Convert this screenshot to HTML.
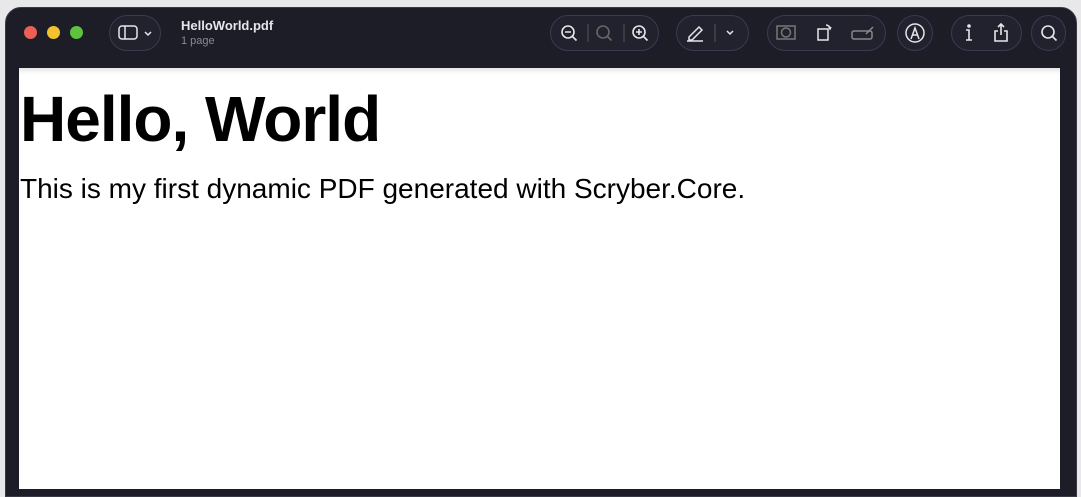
<!DOCTYPE html>
<html><head><meta charset="utf-8"><style>
*{margin:0;padding:0;box-sizing:border-box}
body{width:1081px;height:489px;background:#e8e8ea;overflow:hidden;position:relative;font-family:"Liberation Sans",sans-serif}
.win{position:absolute;left:5px;top:7px;width:1072px;height:490px;background:#1d1d28;border-radius:16px 16px 0 0;border:1px solid #3a3a46}
.page{position:absolute;left:19px;top:68px;width:1041px;height:421px;background:#fff;box-shadow:inset 0 6px 6px -4px #ddd}
.dot{position:absolute;top:26px;width:13px;height:13px;border-radius:50%}
.pill{position:absolute;top:15px;height:36px;border:1px solid #3a3a50;border-radius:18px;background:#22222f}
svg{position:absolute}
.t1{position:absolute;left:181px;top:18px;color:#e6e6ea;font-weight:bold;font-size:13px}
.t2{position:absolute;left:181px;top:35px;color:#8a8a95;font-size:11px}
h1{position:absolute;left:20px;top:82px;font-size:64px;font-weight:bold;color:#000;letter-spacing:-1px;white-space:nowrap}
p{position:absolute;left:20px;top:173px;font-size:28px;color:#000;white-space:nowrap}
</style></head><body>
<div class="win"></div>
<div class="dot" style="left:24px;background:#ec5f57"></div>
<div class="dot" style="left:47px;background:#f4c02e"></div>
<div class="dot" style="left:70px;background:#5ec23f"></div>
<div class="pill" style="left:109px;width:52px"></div>
<svg style="left:118px;top:24px" width="40" height="18" stroke="#e6e6ea" fill="none" stroke-width="1.5"><rect x="1" y="2" width="18" height="13" rx="3"/><line x1="7" y1="2" x2="7" y2="15"/><path d="M27 8l3 3 3-3"/></svg>
<div class="t1">HelloWorld.pdf</div><div class="t2">1 page</div>
<div class="pill" style="left:550px;width:109px"></div>
<svg style="left:558px;top:22px" width="95" height="22" stroke="#e6e6ea" fill="none" stroke-width="1.6"><circle cx="10" cy="10" r="6"/><path d="M14.5 14.5l4 4M7 10h6"/><line x1="30" y1="2" x2="30" y2="20" stroke="#444"/><circle cx="45" cy="10" r="6" stroke="#666"/><path d="M49.5 14.5l4 4" stroke="#666"/><line x1="66" y1="2" x2="66" y2="20" stroke="#444"/><circle cx="81" cy="10" r="6"/><path d="M85.5 14.5l4 4M78 10h6M81 7v6"/></svg>
<div class="pill" style="left:676px;width:73px"></div>
<svg style="left:684px;top:22px" width="60" height="22" stroke="#e6e6ea" fill="none" stroke-width="1.5"><path d="M5 15l10-10 3 3-10 10H5z"/><line x1="3" y1="19" x2="19" y2="19"/><line x1="31" y1="2" x2="31" y2="20" stroke="#444"/><path d="M43 9l3 3 3-3"/></svg>
<div class="pill" style="left:767px;width:119px"></div>
<svg style="left:774px;top:22px" width="110" height="22" stroke="#e6e6ea" fill="none" stroke-width="1.5"><rect x="3" y="4" width="18" height="13" stroke="#777"/><circle cx="12" cy="10.5" r="4.5" stroke="#777"/><rect x="44" y="7" width="10" height="11"/><path d="M52 3a4 4 0 0 1 4 4M55 5l1 2 1-2"/><rect x="78" y="9" width="20" height="8" rx="2" stroke="#888"/><path d="M92 12l7-7" stroke="#888"/></svg>
<div class="pill" style="left:897px;width:36px"></div>
<svg style="left:904px;top:22px" width="22" height="22" stroke="#e6e6ea" fill="none" stroke-width="1.5"><circle cx="11" cy="11" r="9"/><path d="M7 17l4-11 4 11M9 13h4"/></svg>
<div class="pill" style="left:951px;width:71px"></div>
<svg style="left:958px;top:21px" width="60" height="24" stroke="#e6e6ea" fill="none" stroke-width="1.6"><circle cx="11" cy="5" r="1" fill="#e6e6ea"/><path d="M8 9h3v10M8 19h6"/><path d="M40 10h-3v10h12V10h-3M43 14V3M40 6l3-3 3 3"/></svg>
<div class="pill" style="left:1031px;width:35px"></div>
<svg style="left:1038px;top:22px" width="22" height="22" stroke="#e6e6ea" fill="none" stroke-width="1.6"><circle cx="10" cy="10" r="6"/><path d="M14.5 14.5l4 4"/></svg>
<div class="page"></div>
<h1>Hello, World</h1>
<p>This is my first dynamic PDF generated with Scryber.Core.</p>
</body></html>
